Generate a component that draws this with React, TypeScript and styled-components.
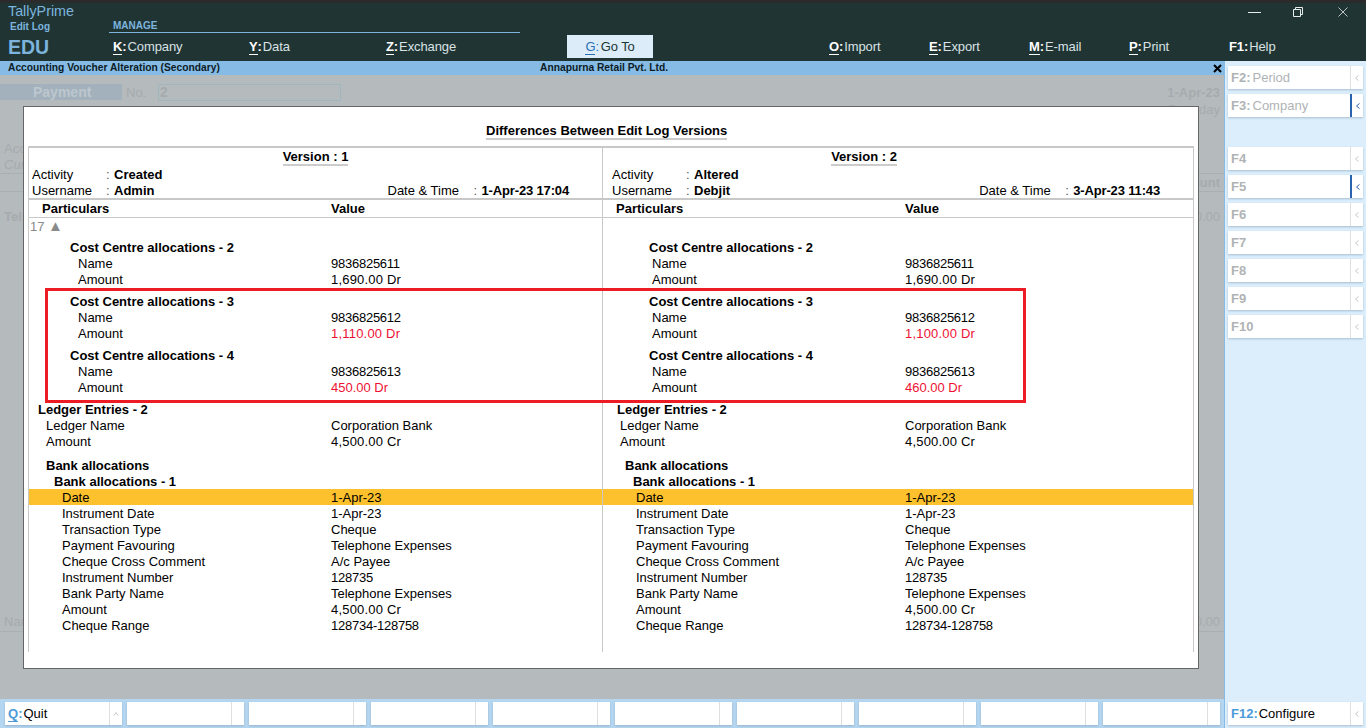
import React from "react";
import styled, { createGlobalStyle } from "styled-components";

const Global = createGlobalStyle`
  html, body { margin: 0; padding: 0; height: 100%; overflow: hidden; background: #b5babd; }
  #root { height: 728px; }
  * { box-sizing: border-box; }
  body { font-family: "Liberation Sans", Arial, sans-serif; }
`;

const Page = styled.div`
  width: 1366px;
  height: 728px;
  display: grid;
  grid-template-rows: 61px 1fr;
  grid-template-columns: 1224px 142px;
  overflow: hidden;
  position: relative;
`;

/* ---------- header ---------- */
const Header = styled.header`
  grid-column: 1 / 3;
  background: #203434;
  border-top: 3px solid #2b2b2b;
  display: grid;
  grid-template-columns: 109px 1fr;
`;
const Brand = styled.div`
  padding-left: 8px;
  display: flex;
  flex-direction: column;
`;
const AppName = styled.div`
  color: #7db4de;
  font-size: 14.3px;
  line-height: 15px;
  margin-top: 1px;
`;
const Sub = styled.div`
  color: #7db4de;
  font-size: 10px;
  font-weight: 700;
  line-height: 11px;
  margin: 2px 0 0 2px;
`;
const Edu = styled.div`
  color: #7db4de;
  font-size: 19.5px;
  font-weight: 700;
  line-height: 20px;
  margin-top: 5px;
`;
const HeaderMain = styled.div`
  display: flex;
  flex-direction: column;
`;
const Controls = styled.div`
  height: 18px;
  display: flex;
  justify-content: flex-end;
  align-items: flex-start;
  gap: 32px;
  padding: 4px 18px 0 0;
  color: #e6ecec;
  svg:last-child { margin-left: 3px; }
`;
const ManageBar = styled.div`
  width: 411px;
  height: 12px;
  border-bottom: 1px solid #7db4de;
  color: #7db4de;
  font-size: 10px;
  font-weight: 700;
  line-height: 10px;
  padding-left: 4px;
`;
const MenuRow = styled.nav`
  display: flex;
  align-items: center;
  height: 23px;
  margin-top: 2px;
`;
const MenuItem = styled.div<{ $w: number; $ml?: number }>`
  width: ${(p) => p.$w}px;
  margin-left: ${(p) => p.$ml ?? 0}px;
  color: #d9e2e4;
  font-size: 13px;
  letter-spacing: -0.1px;
  white-space: nowrap;
  display: flex;
  align-items: center;
`;
const Key = styled.span`
  color: #fff;
  font-weight: 700;
  margin-right: 1px;
`;
const Under = styled.span`
  display: inline-block;
  border-bottom: 1px solid #fff;
  line-height: 15px;
`;
const GoButton = styled.div`
  width: 86px;
  height: 23px;
  background: #dcecf9;
  color: #203434;
  font-size: 13px;
  letter-spacing: -0.15px;
  display: flex;
  align-items: center;
  justify-content: center;
  margin-right: 176px;
`;
const GoKey = styled.span`
  color: #2a6fb5;
  margin-right: 2px;
`;
const GoUnder = styled.span`
  display: inline-block;
  border-bottom: 1px solid #2a6fb5;
  line-height: 15px;
`;

/* ---------- left area ---------- */
const Left = styled.div`
  display: flex;
  flex-direction: column;
  min-height: 0;
`;
const TitleBar = styled.div`
  height: 14px;
  background: #85bbe4;
  display: grid;
  grid-template-columns: 532px 1fr auto;
  padding: 0 2px 0 8px;
  align-items: center;
  color: #0d1b26;
  font-size: 10.25px;
  font-weight: 700;
  line-height: 14px;
`;
const TitleClose = styled.span`
  display: flex;
  color: #000;
`;
const Body = styled.main`
  flex: 1;
  background: #b5babd;
  padding-top: 9px;
  display: flex;
  flex-direction: column;
  color: #a6abae;
  font-size: 13px;
`;
const GhostTop = styled.div`
  display: flex;
  align-items: center;
  height: 16px;
  padding-right: 4px;
`;
const PayChip = styled.div`
  width: 122px;
  height: 16px;
  background: #a3b1bd;
  color: #bcc7ce;
  font-size: 14px;
  font-weight: 700;
  line-height: 16px;
  padding-left: 33px;
`;
const GhostNo = styled.span`
  width: 36px;
  padding-left: 4px;
`;
const GhostInput = styled.div`
  width: 183px;
  height: 17px;
  border: 1px solid #9fb6bf;
  padding-left: 1px;
  font-size: 14px;
  font-weight: 700;
  line-height: 15px;
`;
const GhostDate = styled.span`
  margin-left: auto;
  font-weight: 700;
  font-size: 13px;
`;
const GhostDay = styled.div`
  text-align: right;
  padding: 2px 4px 0 0;
  height: 18px;
  line-height: 16px;
`;
const GhostStack = styled.div`
  margin-top: 23px;
  padding-left: 4px;
  line-height: 16px;
  height: 33px;
  border-bottom: 1px solid #aaafb2;
`;
const GhostItalic = styled.i`
  display: block;
`;
const GhostHeadRow = styled.div`
  height: 18px;
  line-height: 16px;
  padding: 1px 4px 0 0;
  text-align: right;
  font-weight: 700;
  border-bottom: 1px solid #aaafb2;
`;
const GhostTotals = styled.div`
  display: flex;
  justify-content: space-between;
  padding: 0 4px;
  margin-top: 17px;
  line-height: 16px;
`;
const GhostTel = styled.b`
  font-weight: 700;
`;
const GhostNarration = styled.div`
  display: flex;
  justify-content: space-between;
  padding: 0 4px;
  margin-top: 389px;
  line-height: 16px;
  height: 18px;
  border-bottom: 1px solid #aaafb2;
`;
const GhostFill = styled.div`
  flex: 1;
`;

/* ---------- bottom ---------- */
const BottomBar = styled.footer`
  height: 29px;
  background: #b5d6f0;
  display: flex;
  gap: 5px;
  padding: 3px 0 0 5px;
`;
const FnKey = styled.div`
  width: 117px;
  height: 23px;
  background: #fff;
  display: flex;
  font-size: 13px;
  color: #000;
  box-shadow: 0 1px 2px rgba(90, 120, 150, 0.35);
`;
const FnText = styled.div`
  flex: 1;
  display: flex;
  align-items: center;
  padding-left: 3px;
`;
const FnHot = styled.span`
  color: #4d9ad8;
  font-weight: 700;
  margin-right: 1px;
`;
const FnHotU = styled.span`
  display: inline-block;
  border-bottom: 1px solid #4d9ad8;
  line-height: 15px;
`;
const FnTab = styled.div<{ $active?: boolean }>`
  width: 13px;
  border-left: ${(p) => (p.$active ? "2px solid #2a63ad" : "1px solid #dfdfdf")};
  color: ${(p) => (p.$active ? "#2a63ad" : "#c9c9c9")};
  display: flex;
  align-items: center;
  justify-content: center;
`;

/* ---------- sidebar ---------- */
const Side = styled.aside`
  background: #dceefb;
  border-left: 1px solid #85bbe4;
  padding: 5px 3px 3px 3px;
  display: flex;
  flex-direction: column;
`;
const SideKey = styled.div<{ $mt?: number }>`
  height: 23px;
  margin-top: ${(p) => p.$mt ?? 5}px;
  background: #fff;
  display: flex;
  font-size: 13px;
  color: #b0b3b5;
  box-shadow: 0 1px 2px rgba(90, 120, 150, 0.4);
`;
const SideText = styled.div`
  flex: 1;
  display: flex;
  align-items: center;
  padding-left: 3px;
`;
const SideHot = styled.span`
  font-weight: 700;
  margin-right: 2px;
`;
const SideFoot = styled.div`
  margin-top: auto;
`;
const ConfigText = styled.span`
  color: #000;
`;
const ConfigHot = styled.span`
  color: #4d9ad8;
  font-weight: 700;
  margin-right: 1px;
`;

/* ---------- modal ---------- */
const Modal = styled.section`
  position: absolute;
  left: 23px;
  top: 106px;
  width: 1176px;
  height: 563px;
  background: #fff;
  border: 1px solid #666;
  padding: 0 3px 0 4px;
  display: flex;
  flex-direction: column;
  color: #000;
  font-size: 13px;
`;
const ModalTitle = styled.h1`
  align-self: flex-start;
  margin: 17px 0 0 458px;
  height: 16px;
  font-size: 13px;
  font-weight: 700;
  line-height: 14px;
  white-space: nowrap;
  border-bottom: 2px solid #ccc;
`;
const Table = styled.div`
  margin-top: 6px;
  width: 1166px;
  border: 1px solid #c8c8c8;
  border-top-width: 2px;
  border-bottom: 0;
`;
const TwoCol = styled.div<{ $hl?: boolean; $h?: number; $line?: number }>`
  display: grid;
  grid-template-columns: 573px 1fr;
  height: ${(p) => p.$h ?? 16}px;
  background: ${(p) => (p.$hl ? "#fdc12d" : "transparent")};
  border-bottom: ${(p) => (p.$line ? `${p.$line}px solid #c8c8c8` : "0")};
`;
const HeadCell = styled.div`
  &:last-child { border-left: 1px solid #c8c8c8; }
`;
const VersionBlock = styled.div<{ $shift: number }>`
  display: flex;
  justify-content: center;
  padding-right: ${(p) => p.$shift}px;
  height: 18px;
`;
const VersionLabel = styled.span`
  font-weight: 700;
  line-height: 18px;
  height: 18px;
  border-bottom: 2px solid #ccc;
`;
const MetaRow = styled.div<{ $left: number }>`
  display: flex;
  height: 16px;
  line-height: 18px;
  padding: 0 33px 0 ${(p) => p.$left}px;
`;
const MetaLabel = styled.span<{ $w: number }>`
  width: ${(p) => p.$w}px;
  white-space: nowrap;
`;
const MetaColon = styled.span`
  width: 8px;
  color: #555;
`;
const MetaValue = styled.b`
  white-space: nowrap;
`;
const MetaDate = styled.b`
  white-space: nowrap;
  letter-spacing: -0.15px;
`;
const MetaRight = styled.div`
  margin-left: auto;
  display: flex;
`;
const ColHead = styled.div`
  display: grid;
  grid-template-columns: 302px 1fr;
  font-weight: 700;
  line-height: 18px;
`;
const ColHeadName = styled.span`
  padding-left: 13px;
`;
const Rows = styled.div`
  position: relative;
`;
const Cell = styled.div<{ $right?: boolean }>`
  display: grid;
  grid-template-columns: 302px 1fr;
  grid-template-rows: 16px;
  line-height: 18px;
  white-space: nowrap;
  ${(p) => (p.$right ? "border-left: 1px solid #c8c8c8;" : "")}
`;
const Label = styled.span<{ $indent: number; $bold?: boolean }>`
  padding-left: ${(p) => p.$indent}px;
  font-weight: ${(p) => (p.$bold ? 700 : 400)};
`;
const Value = styled.span<{ $changed?: boolean; $ls: number }>`
  color: ${(p) => (p.$changed ? "#ee1133" : "#000")};
  letter-spacing: ${(p) => p.$ls}px;
`;
const PageMark = styled.span`
  color: #8a8a8a;
  padding-left: 1px;
`;
const PageArrow = styled.span`
  font-size: 15px;
  line-height: 14px;
`;
const RedBox = styled.div`
  position: absolute;
  left: 16px;
  top: 54px;
  width: 981px;
  height: 115px;
  border: 3px solid #ed1c24;
  pointer-events: none;
`;

/* ---------- data ---------- */
type R =
  | { gap: number }
  | { h: [number, number]; t: string }
  | { n: number; l: string; a: string; b: string; c?: boolean; hl?: boolean };

const cc = (i: number, n1: string, a1: string, a2: string, c?: boolean): R[] => [
  { h: [41, 46], t: `Cost Centre allocations - ${i}` },
  { n: 49, l: "Name", a: n1, b: n1 },
  { n: 49, l: "Amount", a: a1, b: a2, c },
];

const bank: [string, string][] = [
  ["Instrument Date", "1-Apr-23"],
  ["Transaction Type", "Cheque"],
  ["Payment Favouring", "Telephone Expenses"],
  ["Cheque Cross Comment", "A/c Payee"],
  ["Instrument Number", "128735"],
  ["Bank Party Name", "Telephone Expenses"],
  ["Amount", "4,500.00 Cr"],
  ["Cheque Range", "128734-128758"],
];

const rows: R[] = [
  { gap: 5 },
  ...cc(2, "9836825611", "1,690.00 Dr", "1,690.00 Dr"),
  { gap: 6 },
  ...cc(3, "9836825612", "1,110.00 Dr", "1,100.00 Dr", true),
  { gap: 6 },
  ...cc(4, "9836825613", "450.00 Dr", "460.00 Dr", true),
  { gap: 6 },
  { h: [9, 14], t: "Ledger Entries - 2" },
  { n: 17, l: "Ledger Name", a: "Corporation Bank", b: "Corporation Bank" },
  { n: 17, l: "Amount", a: "4,500.00 Cr", b: "4,500.00 Cr" },
  { gap: 8 },
  { h: [17, 22], t: "Bank allocations" },
  { h: [25, 30], t: "Bank allocations - 1" },
  { n: 33, l: "Date", a: "1-Apr-23", b: "1-Apr-23", hl: true },
  ...bank.map(([l, v]): R => ({ n: 33, l, a: v, b: v })),
  { gap: 19 },
];

const Chevron = ({ up }: { up?: boolean }) => (
  <svg width="6" height="8" viewBox="0 0 6 8" fill="none" stroke="currentColor" strokeWidth="1">
    {up ? <path d="M1 5.5 3 2.5 5 5.5" /> : <path d="M4.5 1.5 1.5 4 4.5 6.5" />}
  </svg>
);

const spacing = (s: string) => {
  if (s.includes(",")) return 0.2;
  if (/^\d[\d-]+$/.test(s)) return -0.25;
  return 0;
};

const renderRow = (r: R, i: number) => {
  if ("gap" in r) {
    return (
      <TwoCol key={i} $h={r.gap}>
        <Cell />
        <Cell $right />
      </TwoCol>
    );
  }
  if ("h" in r) {
    return (
      <TwoCol key={i}>
        <Cell>
          <Label $indent={r.h[0]} $bold>{r.t}</Label>
        </Cell>
        <Cell $right>
          <Label $indent={r.h[1]} $bold>{r.t}</Label>
        </Cell>
      </TwoCol>
    );
  }
  return (
    <TwoCol key={i} $hl={r.hl}>
      <Cell>
        <Label $indent={r.n}>{r.l}</Label>
        <Value $changed={r.c} $ls={spacing(r.a)}>{r.a}</Value>
      </Cell>
      <Cell $right>
        <Label $indent={r.n}>{r.l}</Label>
        <Value $changed={r.c} $ls={spacing(r.b)}>{r.b}</Value>
      </Cell>
    </TwoCol>
  );
};

const Hot = ({ k }: { k: string }) => (
  <Key><Under>{k}</Under>:</Key>
);

const sideKeys: { k: string; t?: string; a?: boolean; mt?: number }[] = [
  { k: "F2:", t: "Period", mt: 0 },
  { k: "F3:", t: "Company", a: true },
  { k: "F4", mt: 30 },
  { k: "F5", a: true },
  { k: "F6" },
  { k: "F7" },
  { k: "F8" },
  { k: "F9" },
  { k: "F10" },
];

const Meta = ({ left, act, user, date }: { left: number; act: string; user: string; date: string }) => (
  <>
    <MetaRow $left={left}>
      <MetaLabel $w={74}>Activity</MetaLabel>
      <MetaColon>:</MetaColon>
      <MetaValue>{act}</MetaValue>
    </MetaRow>
    <MetaRow $left={left}>
      <MetaLabel $w={74}>Username</MetaLabel>
      <MetaColon>:</MetaColon>
      <MetaValue>{user}</MetaValue>
      <MetaRight>
        <MetaLabel $w={86}>Date &amp; Time</MetaLabel>
        <MetaColon>:</MetaColon>
        <MetaDate>{date}</MetaDate>
      </MetaRight>
    </MetaRow>
  </>
);

export default function App() {
  return (
    <Page>
      <Global />
      <Header>
        <Brand>
          <AppName>TallyPrime</AppName>
          <Sub>Edit Log</Sub>
          <Edu>EDU</Edu>
        </Brand>
        <HeaderMain>
          <Controls>
            <svg width="13" height="10" viewBox="0 0 13 10" stroke="currentColor" fill="none">
              <path d="M0 5.5H13" />
            </svg>
            <svg width="10" height="10" viewBox="0 0 10 10" stroke="currentColor" fill="none">
              <path d="M0.5 2.5H7.5V9.5H0.5ZM2.5 2.5V0.5H9.5V7.5H7.5" />
            </svg>
            <svg width="10" height="10" viewBox="0 0 10 10" stroke="currentColor" fill="none" strokeWidth="0.8">
              <path d="M0.5 0.5 9.5 9.5M9.5 0.5 0.5 9.5" />
            </svg>
          </Controls>
          <ManageBar>MANAGE</ManageBar>
          <MenuRow>
            <MenuItem $w={136} $ml={4}><Hot k="K" />Company</MenuItem>
            <MenuItem $w={137}><Hot k="Y" />Data</MenuItem>
            <MenuItem $w={181}><Hot k="Z" />Exchange</MenuItem>
            <GoButton>
              <GoKey><GoUnder>G</GoUnder>:</GoKey>Go To
            </GoButton>
            <MenuItem $w={100}><Hot k="O" />Import</MenuItem>
            <MenuItem $w={100}><Hot k="E" />Export</MenuItem>
            <MenuItem $w={100}><Hot k="M" />E-mail</MenuItem>
            <MenuItem $w={100}><Hot k="P" />Print</MenuItem>
            <MenuItem $w={60}><Key>F1:</Key>Help</MenuItem>
          </MenuRow>
        </HeaderMain>
      </Header>

      <Left>
        <TitleBar>
          <span>Accounting Voucher Alteration (Secondary)</span>
          <span>Annapurna Retail Pvt. Ltd.</span>
          <TitleClose>
            <svg width="9" height="9" viewBox="0 0 9 9" stroke="currentColor" strokeWidth="2" fill="none">
              <path d="M1 1 8 8M8 1 1 8" />
            </svg>
          </TitleClose>
        </TitleBar>
        <Body>
          <GhostTop>
            <PayChip>Payment</PayChip>
            <GhostNo>No.</GhostNo>
            <GhostInput>2</GhostInput>
            <GhostDate>1-Apr-23</GhostDate>
          </GhostTop>
          <GhostDay>Saturday</GhostDay>
          <GhostStack>
            Acc
            <GhostItalic>Cur</GhostItalic>
          </GhostStack>
          <GhostHeadRow>Amount</GhostHeadRow>
          <GhostTotals>
            <GhostTel>Tel</GhostTel>
            <span>4,500.00</span>
          </GhostTotals>
          <GhostNarration>
            <span>Nar</span>
            <span>4,500.00</span>
          </GhostNarration>
          <GhostFill />
        </Body>
        <BottomBar>
          <FnKey>
            <FnText>
              <FnHot><FnHotU>Q</FnHotU>:</FnHot>Quit
            </FnText>
            <FnTab><Chevron up /></FnTab>
          </FnKey>
          {Array.from({ length: 9 }, (_, i) => (
            <FnKey key={i}>
              <FnText />
              <FnTab />
            </FnKey>
          ))}
        </BottomBar>
      </Left>

      <Side>
        {sideKeys.map((s) => (
          <SideKey key={s.k} $mt={s.mt}>
            <SideText>
              <SideHot>{s.k}</SideHot>
              {s.t}
            </SideText>
            <FnTab $active={s.a}><Chevron /></FnTab>
          </SideKey>
        ))}
        <SideFoot>
          <SideKey $mt={0}>
            <SideText>
              <ConfigHot>F12:</ConfigHot>
              <ConfigText>Configure</ConfigText>
            </SideText>
            <FnTab><Chevron /></FnTab>
          </SideKey>
        </SideFoot>
      </Side>

      <Modal>
        <ModalTitle>Differences Between Edit Log Versions</ModalTitle>
        <Table>
          <TwoCol $h={52} $line={2}>
            <HeadCell>
              <VersionBlock $shift={0}>
                <VersionLabel>Version : 1</VersionLabel>
              </VersionBlock>
              <Meta left={3} act="Created" user="Admin" date="1-Apr-23 17:04" />
            </HeadCell>
            <HeadCell>
              <VersionBlock $shift={68}>
                <VersionLabel>Version : 2</VersionLabel>
              </VersionBlock>
              <Meta left={9} act="Altered" user="Debjit" date="3-Apr-23 11:43" />
            </HeadCell>
          </TwoCol>
          <TwoCol $h={18} $line={1}>
            <HeadCell>
              <ColHead>
                <ColHeadName>Particulars</ColHeadName>
                <span>Value</span>
              </ColHead>
            </HeadCell>
            <HeadCell>
              <ColHead>
                <ColHeadName>Particulars</ColHeadName>
                <span>Value</span>
              </ColHead>
            </HeadCell>
          </TwoCol>
          <TwoCol>
            <Cell>
              <PageMark>17 <PageArrow>▲</PageArrow></PageMark>
            </Cell>
            <Cell $right />
          </TwoCol>
          <Rows>
            {rows.map(renderRow)}
            <RedBox />
          </Rows>
        </Table>
      </Modal>
    </Page>
  );
}
